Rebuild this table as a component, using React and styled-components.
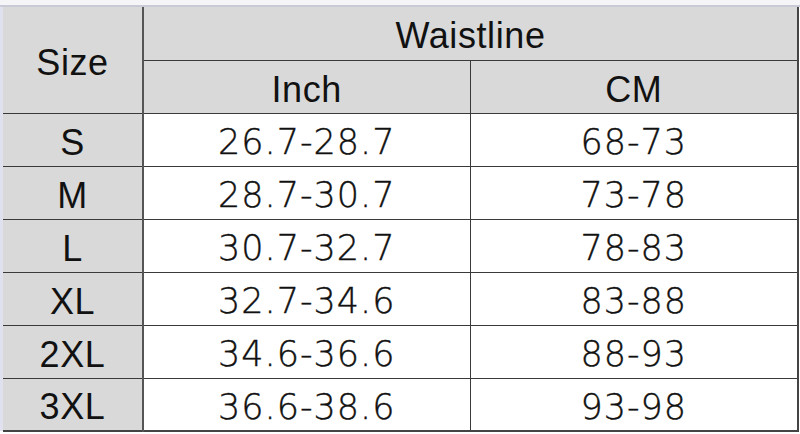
import React from 'react';
import styled, { createGlobalStyle } from 'styled-components';

const GlobalStyle = createGlobalStyle`
  html, body {
    margin: 0;
    padding: 0;
    background: #ffffff;
  }
  body {
    font-family: "Liberation Sans", Arial, sans-serif;
  }
`;

const Page = styled.div`
  width: 800px;
  height: 434px;
  box-sizing: border-box;
  padding: 7px 0 0 3px;
  background: linear-gradient(#f5f5f8 0, #f5f5f8 5px, #c9cad6 5px, #c9cad6 7px, #ffffff 7px);
  position: relative;
  overflow: hidden;

  &::before {
    content: "";
    position: absolute;
    left: 0;
    top: 7px;
    width: 3px;
    height: 424px;
    background: #dfe1ef;
  }
`;

const Table = styled.table`
  width: 795px;
  border-collapse: collapse;
  table-layout: fixed;
  border-right: 2px solid #444;
  border-bottom: 2px solid #444;
`;

const Cell = styled.td`
  height: ${p => p.$h || 53}px;
  padding: 0;
  text-align: center;
  vertical-align: middle;
  background: ${p => (p.$gray ? '#d9d9d9' : '#ffffff')};
  border-top: ${p => (p.$top ? 'none' : '1px solid #3a3a3a')};
  border-bottom: 1px solid #3a3a3a;
  border-right: ${p => (p.$split ? '2px solid #555' : '1px solid #3a3a3a')};
  font-family: ${p => (p.$label ? '"Liberation Sans", Arial, sans-serif' : '"DejaVu Sans", "Liberation Sans", sans-serif')};
  font-size: ${p => (p.$label ? 36 : 35)}px;
  font-weight: ${p => (p.$label ? 400 : 200)};
  letter-spacing: ${p => (p.$label ? 0.6 : 1)}px;
  color: ${p => (p.$label ? '#111' : '#111')};
  -webkit-text-stroke: ${p => (p.$label ? 0 : 0.4)}px #111;
  line-height: 1;
  padding-top: 6px;
  box-sizing: border-box;
`;

const rows = [
  ['S', '26.7-28.7', '68-73'],
  ['M', '28.7-30.7', '73-78'],
  ['L', '30.7-32.7', '78-83'],
  ['XL', '32.7-34.6', '83-88'],
  ['2XL', '34.6-36.6', '88-93'],
  ['3XL', '36.6-38.6', '93-98'],
];

export default function App() {
  return (
    <>
      <GlobalStyle />
      <Page>
        <Table>
          <colgroup>
            <col style={{ width: 140 }} />
            <col style={{ width: 327 }} />
            <col style={{ width: 328 }} />
          </colgroup>
          <tbody>
            <tr>
              <Cell rowSpan={2} $gray $label $split $top $h={106}>Size</Cell>
              <Cell colSpan={2} $gray $label $top>Waistline</Cell>
            </tr>
            <tr>
              <Cell $gray $label>Inch</Cell>
              <Cell $gray $label>CM</Cell>
            </tr>
            {rows.map(([size, inch, cm]) => (
              <tr key={size}>
                <Cell $gray $label $split>{size}</Cell>
                <Cell>{inch}</Cell>
                <Cell>{cm}</Cell>
              </tr>
            ))}
          </tbody>
        </Table>
      </Page>
    </>
  );
}
